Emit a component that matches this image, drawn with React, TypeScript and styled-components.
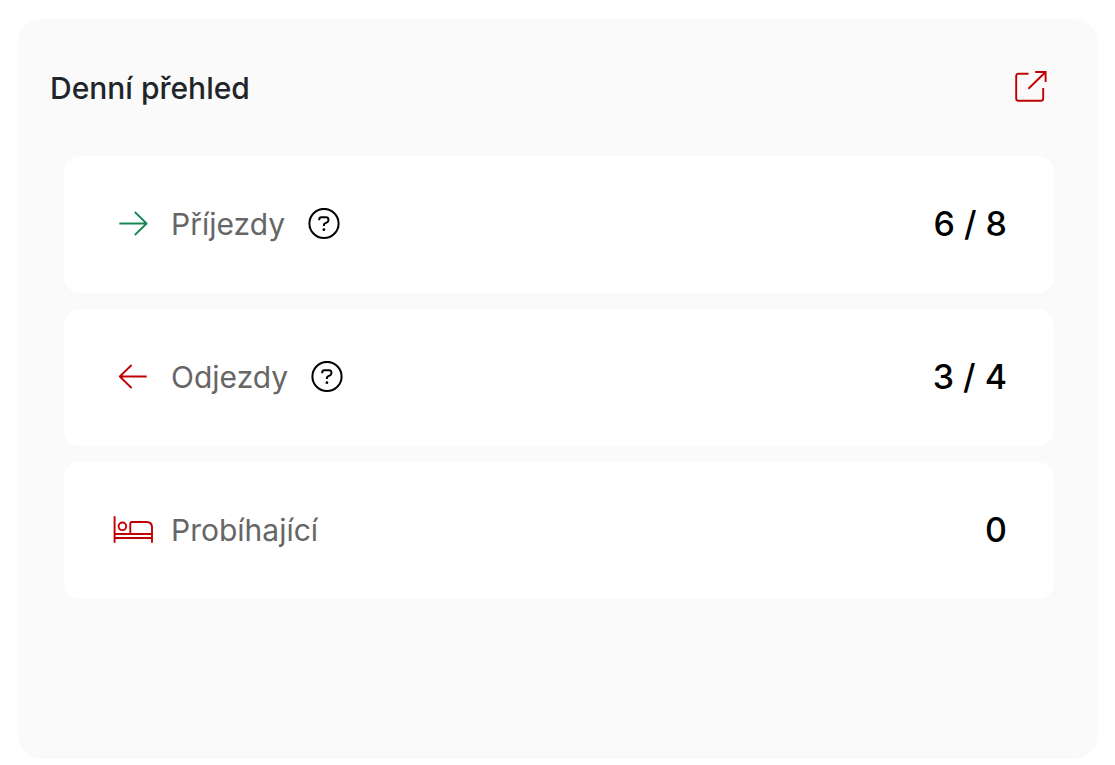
import React from "react";
import styled, { createGlobalStyle } from "styled-components";

const GlobalStyle = createGlobalStyle`
  *, *::before, *::after { box-sizing: border-box; }
  body {
    margin: 0;
    background: #ffffff;
    font-family: Inter, "Liberation Sans", sans-serif;
  }
`;

const Page = styled.main`
  min-height: 100vh;
  display: flex;
  padding: 19px 17px 6px 18px;
`;

const Panel = styled.section`
  flex: 1;
  min-width: 0;
  padding: 48px 44px 48px 32px;
  border-radius: 24px;
  background: #fafafa;
`;

const PanelHeader = styled.header`
  display: flex;
  align-items: center;
  justify-content: space-between;
  height: 42px;
  padding-right: 7px;
`;

const Title = styled.h2`
  margin: 0;
  color: #212529;
  font-size: 30px;
  font-weight: 500;
  line-height: 42px;
`;

const OpenLink = styled.a`
  display: flex;
  color: #c00000;
`;

const List = styled.ul`
  display: flex;
  flex-direction: column;
  gap: 16px;
  margin: 47px 0 0 14px;
  padding: 0;
  list-style: none;
`;

const Item = styled.li`
  display: flex;
  align-items: center;
  justify-content: space-between;
  padding: 44px 47px 45px 49px;
  border-radius: 16px;
  background: #ffffff;
`;

const ItemInfo = styled.div`
  display: flex;
  align-items: center;
`;

const IconSlot = styled.span<{ $color: string }>`
  display: flex;
  justify-content: center;
  width: 40px;
  margin-right: 18px;
  color: ${({ $color }) => $color};
`;

const Label = styled.span`
  color: #666666;
  font-size: 30px;
  line-height: 48px;
`;

const HelpButton = styled.button`
  display: flex;
  margin: 0 0 0 23px;
  padding: 0;
  border: 0;
  background: none;
  color: #000000;
  cursor: pointer;
`;

const Value = styled.span`
  color: #000000;
  font-size: 34px;
  font-weight: 500;
  line-height: 48px;
`;

const LineIcon = styled.svg`
  display: block;
  fill: none;
  stroke: currentColor;
  stroke-linejoin: round;
`;

const ArrowRightIcon = () => (
  <LineIcon width="32" height="32" viewBox="0 0 32 32" strokeWidth="1.8" aria-hidden="true">
    <path d="M2.3 15.5H29.6M17.8 4L29.6 15.5L17.8 27" />
  </LineIcon>
);

const ArrowLeftIcon = () => (
  <LineIcon width="32" height="32" viewBox="0 0 32 32" strokeWidth="1.8" aria-hidden="true">
    <path d="M29.7 15.5H2.8M14.6 4L2.8 15.5L14.6 27" />
  </LineIcon>
);

const OpenIcon = () => (
  <LineIcon width="32" height="34" viewBox="0 0 32 34" strokeWidth="1.9" aria-hidden="true">
    <path d="M13.5 2.8H3.4Q1.2 2.8 1.2 5V27.6Q1.2 29.8 3.4 29.8H26Q28.2 29.8 28.2 27.6V17" />
    <path d="M20.2 1H30.6V11M30.6 1L13.4 17.8" strokeLinejoin="miter" />
  </LineIcon>
);

const HelpIcon = () => (
  <LineIcon width="32" height="32" viewBox="0 0 32 32" strokeWidth="2" aria-hidden="true">
    <circle cx="16" cy="15.5" r="14.6" />
    <path d="M11.2 12.2V11.6Q11.2 9.2 13.6 9.2H18Q20.4 9.2 20.4 11.6V12.2Q20.4 13.6 19 14.3L17 15.3Q15.9 15.9 15.9 17V18" />
    <circle cx="15.9" cy="21.7" r="1.4" fill="currentColor" stroke="none" />
  </LineIcon>
);

const BedIcon = () => (
  <LineIcon width="40" height="28" viewBox="0 0 40 28" strokeWidth="1.9" aria-hidden="true">
    <path d="M1.6 0.3V26.8M39 26.8V11.5Q39 6 33.5 6H19Q17.3 6 17.3 7.7V18M1.6 18H39M1.6 22H39" />
    <circle cx="9.4" cy="10.3" r="3.8" />
  </LineIcon>
);

type Row = {
  label: string;
  value: string;
  color: string;
  icon: React.ReactNode;
  help?: boolean;
};

const rows: Row[] = [
  { label: "Příjezdy", value: "6 / 8", color: "#198754", icon: <ArrowRightIcon />, help: true },
  { label: "Odjezdy", value: "3 / 4", color: "#c00000", icon: <ArrowLeftIcon />, help: true },
  { label: "Probíhající", value: "0", color: "#c00000", icon: <BedIcon /> },
];

export default function App() {
  return (
    <>
      <GlobalStyle />
      <Page>
        <Panel>
          <PanelHeader>
            <Title>Denní přehled</Title>
            <OpenLink href="#" aria-label="Denní přehled">
              <OpenIcon />
            </OpenLink>
          </PanelHeader>
          <List>
            {rows.map((row) => (
              <Item key={row.label}>
                <ItemInfo>
                  <IconSlot $color={row.color}>{row.icon}</IconSlot>
                  <Label>{row.label}</Label>
                  {row.help && (
                    <HelpButton type="button" aria-label={row.label}>
                      <HelpIcon />
                    </HelpButton>
                  )}
                </ItemInfo>
                <Value>{row.value}</Value>
              </Item>
            ))}
          </List>
        </Panel>
      </Page>
    </>
  );
}
